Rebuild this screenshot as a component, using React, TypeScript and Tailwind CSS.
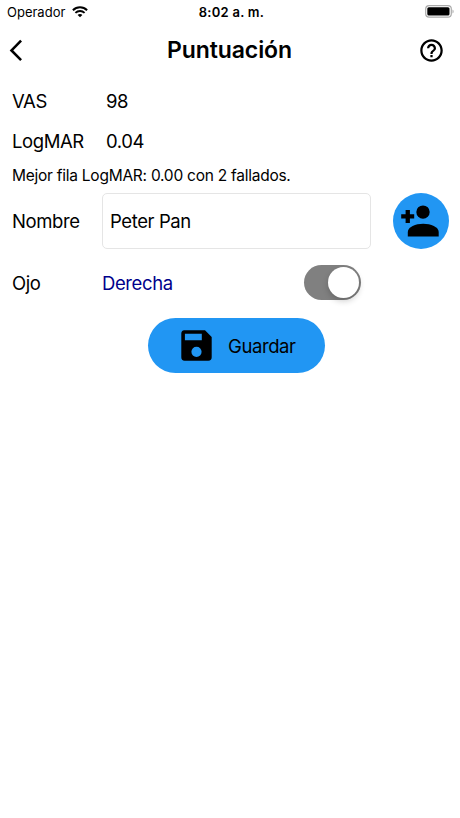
import { useState } from "react";

const WifiIcon = () => (
  <svg width="16" height="12" viewBox="0 0 16 12" fill="none" stroke="#000">
    <path d="M0.9 4.2C4.9 0.3 11.1 0.3 15.1 4.2" strokeWidth="2" />
    <path d="M3.4 6.9C6 4.4 10 4.4 12.6 6.9" strokeWidth="1.9" />
    <path d="M8 11.3L5.6 8.9C6.9 7.7 9.1 7.7 10.4 8.9Z" fill="#000" stroke="none" />
  </svg>
);

const BatteryIcon = () => (
  <svg width="29" height="13" viewBox="0 0 29 13">
    <rect x="0.7" y="0.7" width="25.6" height="11.4" rx="3.4" fill="#fff" stroke="#aaa" strokeWidth="1.2" />
    <rect x="2.3" y="2.3" width="22.2" height="8.3" rx="1.5" fill="#000" />
    <path d="M27.5 4.5C29 5 29 8 27.5 8.5Z" fill="#aaa" />
  </svg>
);

const BackIcon = () => (
  <svg width="14" height="24" viewBox="0 0 14 24" fill="none" stroke="#000" strokeWidth="2.6">
    <path d="M13.1 2.6L3.5 12.4L13.1 22.2" />
  </svg>
);

const HelpIcon = () => (
  <svg width="27" height="27" viewBox="0 0 24 24">
    <path d="M11 18h2v-2h-2v2zm1-16C6.48 2 2 6.48 2 12s4.48 10 10 10 10-4.48 10-10S17.52 2 12 2zm0 18c-4.41 0-8-3.59-8-8s3.59-8 8-8 8 3.59 8 8-3.59 8-8 8zm0-14c-2.21 0-4 1.79-4 4h2c0-1.1.9-2 2-2s2 .9 2 2c0 2-3 1.75-3 5h2c0-2.25 3-2.5 3-5 0-2.21-1.79-4-4-4z" />
  </svg>
);

const PersonAddIcon = () => (
  <svg width="38" height="32" viewBox="0 0 38 32">
    <circle cx="22" cy="7.1" r="6.7" />
    <path d="M4.6 4.9H8.9V9.2H13.2V13.4H8.9V17.9H4.6V13.4H0.2V9.2H4.6Z" />
    <path d="M6.8 31.6V27C6.8 21.8 14.6 18.7 22.2 18.7S37.7 21.8 37.7 27V31.6Z" />
  </svg>
);

const SaveIcon = () => (
  <svg width="31" height="31" viewBox="0 0 31 31" fillRule="evenodd">
    <path d="M3.2 0.3H24L30.7 7V27.3A3.4 3.4 0 0 1 27.3 30.7H3.6A3.4 3.4 0 0 1 0.3 27.3V3.6A3.3 3.3 0 0 1 3.2 0.3ZM3.9 3.8V10.3H20.8V3.8ZM15.5 16.7A5.1 5.1 0 1 0 15.5 26.9A5.1 5.1 0 1 0 15.5 16.7Z" />
  </svg>
);

export default function App() {
  const [name, setName] = useState("Peter Pan");
  const [rightEye, setRightEye] = useState(true);

  return (
    <div className="h-[818px] w-[460px] overflow-hidden bg-white font-['Inter',sans-serif] text-[18.5px] leading-6 tracking-[-0.4px] text-black">
      <div className="grid h-6 grid-cols-3 items-center pr-[6px] pl-[7px] text-[13px] tracking-normal">
        <div className="flex items-center gap-[7px]">
          <span>Operador</span>
          <WifiIcon />
        </div>
        <span className="pl-[2px] text-center font-semibold tracking-[0.25px]">8:02 a. m.</span>
        <div className="flex justify-end pb-[2px]">
          <BatteryIcon />
        </div>
      </div>

      <header className="flex h-[52px] items-center justify-between pr-[15px] pl-2">
        <button aria-label="Atrás" className="w-[33px]">
          <BackIcon />
        </button>
        <h1 className="text-[23px] font-semibold tracking-[-0.1px]">Puntuación</h1>
        <button aria-label="Ayuda">
          <HelpIcon />
        </button>
      </header>

      <main className="px-3 pt-[5px]">
        <div className="flex h-10 items-center">
          <span className="w-[94px]">VAS</span>
          <span>98</span>
        </div>
        <div className="flex h-10 items-center">
          <span className="w-[94px]">LogMAR</span>
          <span>0.04</span>
        </div>
        <p className="flex h-7 items-center pt-[2px] text-[15.5px] tracking-[-0.25px]">
          Mejor fila LogMAR: 0.00 con 2 fallados.
        </p>

        <div className="-mr-1 mt-1 flex h-14 items-center">
          <span className="w-[90px]">Nombre</span>
          <input
            aria-label="Nombre"
            value={name}
            onChange={(e) => setName(e.target.value)}
            className="h-14 w-[269px] rounded-[5px] border border-[#e5e5e5] px-[7px] outline-none"
          />
          <button
            aria-label="Agregar persona"
            className="ml-[22px] flex size-14 items-center justify-center rounded-full bg-[#2196f3] pr-[2px]"
          >
            <PersonAddIcon />
          </button>
        </div>

        <div className="mt-4 flex h-[35px] items-center">
          <span className="w-[90px] pt-[1px]">Ojo</span>
          <span className="w-[202px] pt-[1px] text-[#00008b]">{rightEye ? "Derecha" : "Izquierda"}</span>
          <button
            role="switch"
            aria-checked={rightEye}
            aria-label="Ojo"
            onClick={() => setRightEye(!rightEye)}
            className={`flex h-[35px] w-[57px] items-center rounded-full bg-[#808080] px-[2px] ${rightEye ? "justify-end" : "justify-start"}`}
          >
            <span className="size-[31px] rounded-full bg-white shadow-[0_3px_6px_rgba(0,0,0,0.2)]" />
          </button>
        </div>

        <button className="mt-[18px] ml-[136px] flex h-[55px] w-[177px] items-center rounded-full bg-[#2196f3] pl-[33px]">
          <SaveIcon />
          <span className="ml-4">Guardar</span>
        </button>
      </main>
    </div>
  );
}
